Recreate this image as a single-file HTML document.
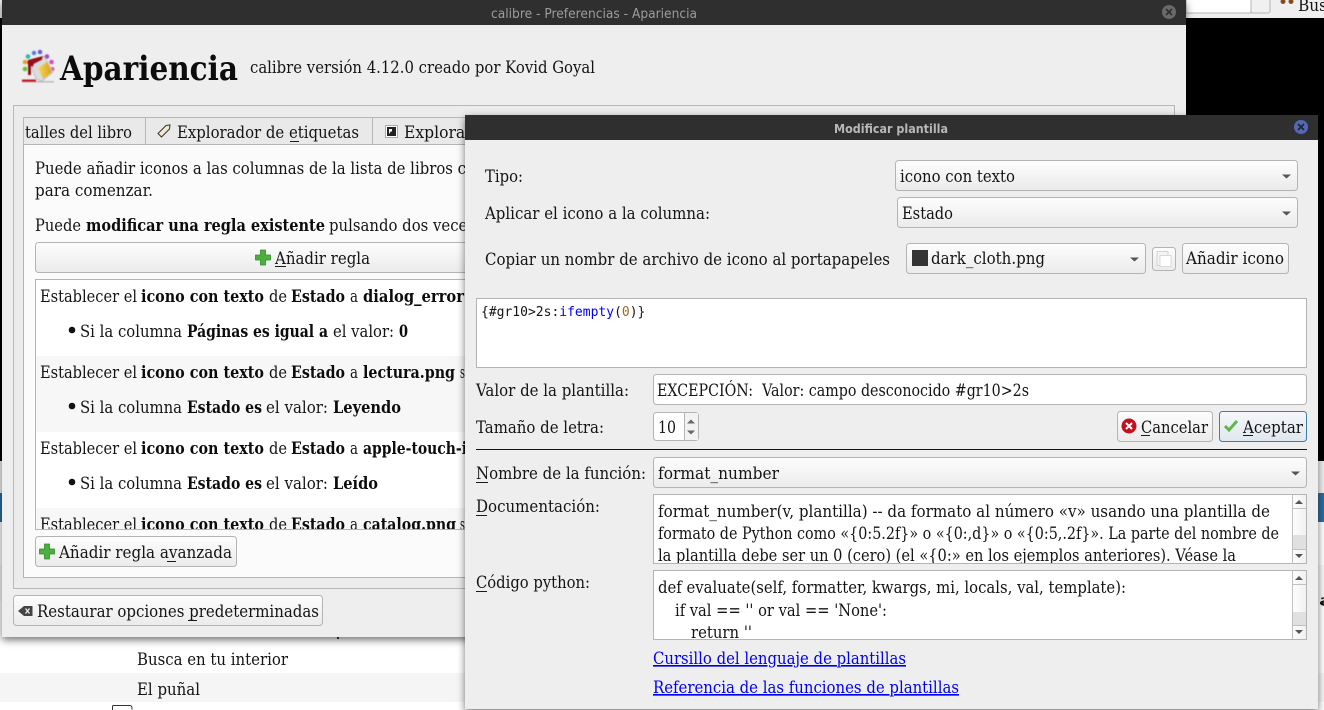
<!DOCTYPE html>
<html><head><meta charset="utf-8"><title>calibre - Preferencias - Apariencia</title>
<style>
html,body{margin:0;padding:0;background:#000;width:1324px;height:710px;overflow:hidden}
svg{display:block}
text{font-family:"DejaVu Serif","Liberation Serif",serif;font-size:16.5px;fill:#141414;white-space:pre}
.b{font-weight:bold;fill:#0c0c0c}
.m{font-family:"DejaVu Sans Mono","Liberation Mono",monospace;font-size:13px}
.l{fill:#0000ee}
.btn{fill:url(#g);stroke:#b4b4b4;stroke-width:1}
.fld{fill:#fff;stroke:#b4b4b4;stroke-width:1}
</style></head><body>
<svg width="1324" height="710" viewBox="0 0 1324 710" xmlns="http://www.w3.org/2000/svg">
<defs>
<linearGradient id="g" x1="0" y1="0" x2="0" y2="1"><stop offset="0" stop-color="#fdfdfd"/><stop offset="1" stop-color="#ebebeb"/></linearGradient>
<linearGradient id="gb" x1="0" y1="0" x2="0" y2="1"><stop offset="0" stop-color="#f6f8fa"/><stop offset="1" stop-color="#dfe7ee"/></linearGradient>
<linearGradient id="gs" x1="0" y1="0" x2="1" y2="0"><stop offset="0" stop-color="#fff"/><stop offset="1" stop-color="#f0f0f0"/></linearGradient>
<linearGradient id="gy" x1="0" y1="0" x2="1" y2="0"><stop offset="0" stop-color="#f4d860"/><stop offset="1" stop-color="#d8a010"/></linearGradient>
<filter id="sh" x="-5%" y="-5%" width="110%" height="110%"><feDropShadow dx="0" dy="3" stdDeviation="4" flood-color="#000" flood-opacity=".55"/></filter>
<filter id="bl" x="-20%" y="-20%" width="140%" height="140%"><feGaussianBlur stdDeviation=".5"/></filter>
<clipPath id="lc"><rect x="36" y="280" width="440" height="249"/></clipPath>
<clipPath id="dc"><rect x="654" y="495" width="638" height="68"/></clipPath>
<clipPath id="pc"><rect x="654" y="571" width="638" height="68"/></clipPath>
<g id="plus"><path d="M5 0h5v5h5v5h-5v5H5v-5H0V5h5z" fill="#4caf3e" stroke="#2f8a2a" stroke-width=".8" stroke-linejoin="round"/></g>
</defs>

<!-- background -->
<rect width="1324" height="710" fill="#000"/>
<rect x="0" y="0" width="1324" height="18" fill="#efefef"/>
<rect x="1186" y="-2" width="65" height="15" fill="#fff" stroke="#b4b4b4"/>
<rect x="1251" y="-2" width="19" height="15" rx="2" fill="#f0f0f0" stroke="#b4b4b4"/>
<circle cx="1283" cy="1.500" r="2.500" fill="#8a4a20"/><circle cx="1291" cy="1.500" r="2.500" fill="#8a4a20"/>
<text x="1298" y="11" textLength="29" lengthAdjust="spacingAndGlyphs">Bus</text>
<rect x="0" y="461" width="1324" height="249" fill="#fff"/>
<rect x="0" y="461" width="1324" height="32" fill="#efefef"/>
<rect x="0" y="493" width="1324" height="29" fill="#2e6c9c"/>
<rect x="0" y="565" width="1324" height="36" fill="#f6f6f6"/>
<rect x="0" y="673" width="1324" height="29" fill="#f5f5f5"/>
<text x="137" y="665" textLength="151" lengthAdjust="spacingAndGlyphs">Busca en tu interior</text>
<text x="137" y="695" textLength="63" lengthAdjust="spacingAndGlyphs">El puñal</text>
<path d="M112.500 710V706.500q0-1 1-1h16q2 0 2.500 2v2" fill="none" stroke="#333"/>
<text x="1318" y="606" textLength="40" lengthAdjust="spacingAndGlyphs">ar</text>

<!-- main window -->
<g filter="url(#sh)">
<rect x="2" y="0" width="1184" height="637" fill="#eeeeee"/>
</g>
<rect x="337" y="637" width="2" height="2" fill="#222"/>
<rect x="2" y="0" width="1184" height="25" fill="#2f2f2f"/>
<text x="491" y="18" textLength="206" lengthAdjust="spacingAndGlyphs" style="font-family:'DejaVu Sans',sans-serif;font-size:13px;fill:#9c9c9c">calibre - Preferencias - Apariencia</text>
<circle cx="1169" cy="12" r="7" fill="#6a6a6a"/>
<path d="M1166 9l6 6M1172 9l-6 6" stroke="#2f2f2f" stroke-width="1.700"/>

<!-- logo -->
<g filter="url(#bl)">
<circle cx="34" cy="53" r="2.200" fill="#4f7fe0"/><circle cx="28" cy="56.500" r="2.300" fill="#2fb8b0"/><circle cx="25" cy="62" r="2.300" fill="#e8a030"/>
<circle cx="25" cy="69" r="2.300" fill="#66c030"/><circle cx="40" cy="52" r="2.300" fill="#6a60d8"/><circle cx="47" cy="56.500" r="2.300" fill="#9a50c8"/>
<circle cx="51.500" cy="62" r="2.300" fill="#d050c0"/><circle cx="52.500" cy="69" r="2.000" fill="#e060a0"/>
<path d="M23 81h31v1.500H23z" fill="#bbb"/>
<path d="M29 61l15-5 9 16-11 9-6-2z" fill="#dcdcdc" stroke="#a8a8a8" stroke-width=".6"/>
<path d="M38 68l9-6 5 10-9 7z" fill="url(#gy)"/>
<path d="M28 60l15-4-1 4-8 4-1 3-2-1v9h-3V64l-1-1z" fill="#96101e"/>
<path d="M22 79.500h14v2.500H22z" fill="#c81828"/>
</g>
<text class="b" x="60" y="80" textLength="178" lengthAdjust="spacingAndGlyphs" style="font-size:33.5px">Apariencia</text>
<text x="250" y="73" textLength="345" lengthAdjust="spacingAndGlyphs">calibre versión 4.12.0 creado por Kovid Goyal</text>

<!-- tab panel -->
<rect x="13.500" y="105.500" width="1161" height="483" fill="#ececec" stroke="#b8b8b8"/>
<rect x="23.500" y="144.500" width="1140" height="433" fill="#fbfbfb" stroke="#b4b4b4"/>
<path d="M23.500 144V117.500H145.500V144" fill="#e9e9e9" stroke="#b8b8b8"/>
<path d="M145.500 144V117.500H372.500V144" fill="#e9e9e9" stroke="#b8b8b8"/>
<path d="M372.500 144V117.500H480V144" fill="#e9e9e9" stroke="#b8b8b8"/>
<text x="25" y="138" textLength="107" lengthAdjust="spacingAndGlyphs">talles del libro</text>
<path d="M158 133.500l8-8 4-.5-.5 4-8 8z" fill="#f5e6cf" stroke="#333" stroke-width="1"/>
<text x="177" y="138" textLength="182" lengthAdjust="spacingAndGlyphs">Explorador de etiquetas</text>
<path d="M290 141.500h9" stroke="#1a1a1a"/>
<rect x="385.500" y="125.500" width="12" height="12" fill="#fff" stroke="#aaa"/>
<rect x="387" y="127" width="9" height="9" fill="#222"/>
<path d="M389 134l2-3 1 1v-3h-3" fill="#fff"/>
<text x="404" y="138" textLength="88" lengthAdjust="spacingAndGlyphs">Explorador</text>

<text x="35" y="174" textLength="431" lengthAdjust="spacingAndGlyphs">Puede añadir iconos a las columnas de la lista de libros c</text>
<text x="35" y="196" textLength="118" lengthAdjust="spacingAndGlyphs">para comenzar.</text>
<text x="35" y="231" textLength="46" lengthAdjust="spacingAndGlyphs">Puede</text>
<text class="b" x="86" y="231" textLength="239" lengthAdjust="spacingAndGlyphs">modificar una regla existente</text>
<text x="329" y="231" textLength="146" lengthAdjust="spacingAndGlyphs">pulsando dos veces</text>

<rect class="btn" x="35.500" y="242.500" width="440" height="30" rx="3"/>
<use href="#plus" x="255.500" y="250"/>
<text x="275" y="264" textLength="95" lengthAdjust="spacingAndGlyphs">Añadir regla</text>
<path d="M275 266.500h11" stroke="#1a1a1a"/>

<!-- rules list -->
<rect x="35.500" y="279.500" width="440" height="250" fill="#fff" stroke="#b4b4b4"/>
<g clip-path="url(#lc)">
<rect x="36" y="356" width="440" height="76" fill="#f7f7f7"/>
<rect x="36" y="508" width="440" height="30" fill="#f7f7f7"/>

<text x="40" y="302" textLength="97" lengthAdjust="spacingAndGlyphs">Establecer el</text>
<text class="b" x="141" y="302" textLength="123" lengthAdjust="spacingAndGlyphs">icono con texto</text>
<text x="269" y="302" textLength="18" lengthAdjust="spacingAndGlyphs">de</text>
<text class="b" x="291" y="302" textLength="54" lengthAdjust="spacingAndGlyphs">Estado</text>
<text x="350" y="302" textLength="8" lengthAdjust="spacingAndGlyphs">a</text>
<text class="b" x="363" y="302" textLength="101" lengthAdjust="spacingAndGlyphs">dialog_error</text>
<circle cx="72" cy="330" r="3.300" fill="#111"/>
<text x="80" y="337" textLength="102" lengthAdjust="spacingAndGlyphs">Si la columna</text>
<text class="b" x="187" y="337" textLength="141" lengthAdjust="spacingAndGlyphs">Páginas es igual a</text>
<text x="333" y="337" textLength="61" lengthAdjust="spacingAndGlyphs">el valor:</text>
<text class="b" x="399" y="337" textLength="9" lengthAdjust="spacingAndGlyphs">0</text>

<text x="40" y="378" textLength="97" lengthAdjust="spacingAndGlyphs">Establecer el</text>
<text class="b" x="141" y="378" textLength="123" lengthAdjust="spacingAndGlyphs">icono con texto</text>
<text x="269" y="378" textLength="18" lengthAdjust="spacingAndGlyphs">de</text>
<text class="b" x="291" y="378" textLength="54" lengthAdjust="spacingAndGlyphs">Estado</text>
<text x="350" y="378" textLength="8" lengthAdjust="spacingAndGlyphs">a</text>
<text class="b" x="363" y="378" textLength="92" lengthAdjust="spacingAndGlyphs">lectura.png</text>
<text x="460" y="378" textLength="8" lengthAdjust="spacingAndGlyphs">si</text>
<circle cx="72" cy="406" r="3.300" fill="#111"/>
<text x="80" y="413" textLength="102" lengthAdjust="spacingAndGlyphs">Si la columna</text>
<text class="b" x="187" y="413" textLength="75" lengthAdjust="spacingAndGlyphs">Estado es</text>
<text x="266" y="413" textLength="62" lengthAdjust="spacingAndGlyphs">el valor:</text>
<text class="b" x="333" y="413" textLength="68" lengthAdjust="spacingAndGlyphs">Leyendo</text>

<text x="40" y="454" textLength="97" lengthAdjust="spacingAndGlyphs">Establecer el</text>
<text class="b" x="141" y="454" textLength="123" lengthAdjust="spacingAndGlyphs">icono con texto</text>
<text x="269" y="454" textLength="18" lengthAdjust="spacingAndGlyphs">de</text>
<text class="b" x="291" y="454" textLength="54" lengthAdjust="spacingAndGlyphs">Estado</text>
<text x="350" y="454" textLength="8" lengthAdjust="spacingAndGlyphs">a</text>
<text class="b" x="363" y="454" textLength="104" lengthAdjust="spacingAndGlyphs">apple-touch-i</text>
<circle cx="72" cy="482" r="3.300" fill="#111"/>
<text x="80" y="489" textLength="102" lengthAdjust="spacingAndGlyphs">Si la columna</text>
<text class="b" x="187" y="489" textLength="75" lengthAdjust="spacingAndGlyphs">Estado es</text>
<text x="266" y="489" textLength="62" lengthAdjust="spacingAndGlyphs">el valor:</text>
<text class="b" x="333" y="489" textLength="45" lengthAdjust="spacingAndGlyphs">Leído</text>

<text x="40" y="530" textLength="97" lengthAdjust="spacingAndGlyphs">Establecer el</text>
<text class="b" x="141" y="530" textLength="123" lengthAdjust="spacingAndGlyphs">icono con texto</text>
<text x="269" y="530" textLength="18" lengthAdjust="spacingAndGlyphs">de</text>
<text class="b" x="291" y="530" textLength="54" lengthAdjust="spacingAndGlyphs">Estado</text>
<text x="350" y="530" textLength="8" lengthAdjust="spacingAndGlyphs">a</text>
<text class="b" x="363" y="530" textLength="93" lengthAdjust="spacingAndGlyphs">catalog.png</text>
<text x="460" y="530" textLength="8" lengthAdjust="spacingAndGlyphs">si</text>
</g>

<rect class="btn" x="35.500" y="536.500" width="201" height="30" rx="3"/>
<use href="#plus" x="39.500" y="544"/>
<text x="59" y="558" textLength="173" lengthAdjust="spacingAndGlyphs">Añadir regla avanzada</text>
<path d="M167 561.500h9" stroke="#1a1a1a"/>

<rect class="btn" x="13.500" y="595.500" width="309" height="30" rx="3"/>
<path d="M18 611l6-5h8.500v10H24z" fill="#444"/>
<path d="M25.500 608.500l4 5M29.500 608.500l-4 5" stroke="#eee" stroke-width="1.300"/>
<text x="37" y="617" textLength="282" lengthAdjust="spacingAndGlyphs">Restaurar opciones predeterminadas</text>
<path d="M188 620.500h9" stroke="#1a1a1a"/>

<!-- dialog -->
<g filter="url(#sh)">
<rect x="465" y="115" width="853" height="594" fill="#eeeeee"/>
</g>
<rect x="465" y="115" width="853" height="25" fill="#2f2f2f"/>
<text x="834" y="133" textLength="114" lengthAdjust="spacingAndGlyphs" style="font-family:'DejaVu Sans',sans-serif;font-size:12px;font-weight:bold;fill:#b8b8b8">Modificar plantilla</text>
<circle cx="1301" cy="127" r="7" fill="#5468b8"/>
<path d="M1298 124l6 6M1304 124l-6 6" stroke="#20242f" stroke-width="1.700"/>

<text x="485" y="182" textLength="38" lengthAdjust="spacingAndGlyphs">Tipo:</text>
<rect class="btn" x="895.500" y="160.500" width="402" height="30" rx="3"/>
<text x="900" y="182" textLength="115" lengthAdjust="spacingAndGlyphs">icono con texto</text>
<path d="M1282 174.500h9l-4.500 4z" fill="#555"/>

<text x="485" y="219" textLength="225" lengthAdjust="spacingAndGlyphs">Aplicar el icono a la columna:</text>
<rect class="btn" x="897.500" y="197.500" width="400" height="30" rx="3"/>
<text x="902" y="219" textLength="51" lengthAdjust="spacingAndGlyphs">Estado</text>
<path d="M1282 211.500h9l-4.500 4z" fill="#555"/>

<text x="485" y="265" textLength="405" lengthAdjust="spacingAndGlyphs">Copiar un nombr de archivo de icono al portapapeles</text>
<rect class="btn" x="906.500" y="243.500" width="239" height="30" rx="3"/>
<rect x="912" y="250" width="16" height="16" fill="#333"/>
<text x="931" y="264" textLength="114" lengthAdjust="spacingAndGlyphs">dark_cloth.png</text>
<path d="M1130 257.500h9l-4.500 4z" fill="#555"/>
<rect class="btn" x="1152.500" y="247.500" width="23" height="23" rx="3"/>
<path d="M1157 251.500h11v14h-11z" fill="#f4f4f4" stroke="#d4d4d4"/>
<path d="M1160 255.500h11v11h-11z" fill="#fff" stroke="#d8d8d8"/>
<rect class="btn" x="1182.500" y="243.500" width="106" height="30" rx="3"/>
<text x="1186" y="264" textLength="98" lengthAdjust="spacingAndGlyphs">Añadir icono</text>

<rect class="fld" x="476.500" y="298.500" width="830" height="69"/>
<text class="m" x="481" y="316" xml:space="preserve">{#gr10&gt;2s:<tspan fill="#0000ff">ifempty</tspan>(<tspan fill="#a8641e">0</tspan>)}</text>

<text x="476" y="396" textLength="153" lengthAdjust="spacingAndGlyphs">Valor de la plantilla:</text>
<rect class="fld" x="653.500" y="374.500" width="653" height="30" rx="3"/>
<text x="657" y="396" textLength="372" lengthAdjust="spacingAndGlyphs" xml:space="preserve">EXCEPCIÓN:  Valor: campo desconocido #gr10&gt;2s</text>

<text x="476" y="433" textLength="128" lengthAdjust="spacingAndGlyphs">Tamaño de letra:</text>
<rect class="fld" x="653.500" y="412.500" width="45" height="28" rx="3"/>
<rect x="685" y="413" width="13" height="27" fill="#f2f2f2"/>
<path d="M684.500 413v27" stroke="#b4b4b4"/>
<path d="M687 423.500h8l-4-4z" fill="#666"/><path d="M687 430.500h8l-4 4z" fill="#666"/>
<text x="658" y="433" textLength="18" lengthAdjust="spacingAndGlyphs">10</text>

<rect class="btn" x="1117.500" y="411.500" width="95" height="30" rx="3"/>
<circle cx="1129" cy="426" r="7.500" fill="#c4101c"/>
<path d="M1126 423l6 6M1132 423l-6 6" stroke="#fff" stroke-width="2"/>
<text x="1141" y="433" textLength="67" lengthAdjust="spacingAndGlyphs">Cancelar</text>
<path d="M1141 435.500h9" stroke="#1a1a1a"/>
<rect x="1219.500" y="411.500" width="87" height="30" rx="3" fill="url(#gb)" stroke="#3d7fae"/>
<path d="M1225 426l4 4 8-9" fill="none" stroke="#5cb84a" stroke-width="3"/>
<text x="1243" y="433" textLength="60" lengthAdjust="spacingAndGlyphs">Aceptar</text>
<path d="M1243 435.500h10" stroke="#1a1a1a"/>

<rect x="476" y="449" width="831" height="1" fill="#141414"/>

<text x="476" y="479" textLength="170" lengthAdjust="spacingAndGlyphs">Nombre de la función:</text>
<path d="M476 482.500h12" stroke="#1a1a1a"/>
<rect class="btn" x="653.500" y="457.500" width="653" height="30" rx="3"/>
<text x="658" y="479" textLength="121" lengthAdjust="spacingAndGlyphs">format_number</text>
<path d="M1291 471.500h9l-4.500 4z" fill="#555"/>

<text x="476" y="512" textLength="124" lengthAdjust="spacingAndGlyphs">Documentación:</text>
<path d="M476 515.500h11" stroke="#1a1a1a"/>
<rect class="fld" x="653.500" y="494.500" width="653" height="69"/>
<g clip-path="url(#dc)">
<text x="658" y="517" textLength="612" lengthAdjust="spacingAndGlyphs">format_number(v, plantilla) -- da formato al número «v» usando una plantilla de</text>
<text x="658" y="539" textLength="621" lengthAdjust="spacingAndGlyphs">formato de Python como «{0:5.2f}» o «{0:,d}» o «{0:5,.2f}». La parte del nombre de</text>
<text x="658" y="561" textLength="578" lengthAdjust="spacingAndGlyphs">la plantilla debe ser un 0 (cero) (el «{0:» en los ejemplos anteriores). Véase la</text>
</g>
<rect x="1292" y="495" width="14" height="68" fill="url(#gs)"/>
<path d="M1292.500 495v68M1292 508.500h14M1292 549.500h14" stroke="#c0c0c0"/>
<rect x="1293" y="535" width="13" height="14" fill="#e0e0e0"/>
<path d="M1295 504h8l-4-4z" fill="#555"/><path d="M1295 554h8l-4 4z" fill="#555"/>

<text x="476" y="588" textLength="114" lengthAdjust="spacingAndGlyphs">Código python:</text>
<path d="M476 591.500h11" stroke="#1a1a1a"/>
<rect class="fld" x="653.500" y="570.500" width="653" height="69"/>
<g clip-path="url(#pc)">
<text x="658" y="593" textLength="468" lengthAdjust="spacingAndGlyphs">def evaluate(self, formatter, kwargs, mi, locals, val, template):</text>
<text x="675" y="616" textLength="212" lengthAdjust="spacingAndGlyphs">if val == '' or val == 'None':</text>
<text x="691" y="638" textLength="61" lengthAdjust="spacingAndGlyphs">return ''</text>
</g>
<rect x="1292" y="571" width="14" height="68" fill="url(#gs)"/>
<path d="M1292.500 571v68M1292 584.500h14M1292 625.500h14" stroke="#c0c0c0"/>
<rect x="1293" y="612" width="13" height="13" fill="#e0e0e0"/>
<path d="M1295 580h8l-4-4z" fill="#555"/><path d="M1295 630h8l-4 4z" fill="#555"/>

<text class="l" x="653" y="664" textLength="253" lengthAdjust="spacingAndGlyphs" text-decoration="underline">Cursillo del lenguaje de plantillas</text>
<text class="l" x="653" y="693" textLength="306" lengthAdjust="spacingAndGlyphs" text-decoration="underline">Referencia de las funciones de plantillas</text>
</svg>
</body></html>
